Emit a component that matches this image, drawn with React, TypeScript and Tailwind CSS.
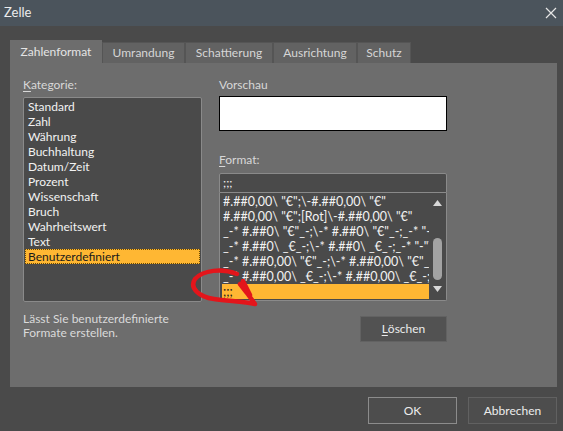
import React from "react";

const categories = [
    "Standard",
    "Zahl",
    "Währung",
    "Buchhaltung",
    "Datum/Zeit",
    "Prozent",
    "Wissenschaft",
    "Bruch",
    "Wahrheitswert",
    "Text",
    "Benutzerdefiniert",
];

const formats = [
    '#.##0,00\\ "€";\\-#.##0,00\\ "€"',
    '#.##0,00\\ "€";[Rot]\\-#.##0,00\\ "€"',
    '_-* #.##0\\ "€"_-;\\-* #.##0\\ "€"_-;_-* "-"\\ "€"_-;_@_-',
    '_-* #.##0\\ _€_-;\\-* #.##0\\ _€_-;_-* "-"\\ _€_-;_@_-',
    '_-* #.##0,00\\ "€"_-;\\-* #.##0,00\\ "€"_-;_-* "-"??\\ "€"_-;_@_-',
    '_-* #.##0,00\\ _€_-;\\-* #.##0,00\\ _€_-;_-* "-"??\\ _€_-;_@_-',
];

const tabs = ["Umrandung", "Schattierung", "Ausrichtung", "Schutz"];
const tabWidths = ["w-[83px]", "w-[88px]", "w-[84px]", "w-[54px]"];

function Label({ first, rest }: { first: string; rest: string }) {
    return (
        <div className="h-[15px] leading-[15px] text-[#d8d8d8]">
            <span className="underline underline-offset-2">{first}</span>
            {rest}
        </div>
    );
}

export default function App() {
    return (
        <div className="w-[563px] h-[431px] bg-[#4a4a4a] flex flex-col text-[12px] font-['Lato',sans-serif] overflow-hidden relative">
            {/* title bar */}
            <div className="h-[26px] bg-[#4b545c] flex items-center justify-between pl-[4px] pr-[6px] text-[#ececec] text-[13px]">
                <span>Zelle</span>
                <svg width="12" height="12" viewBox="0 0 12 12" className="text-[#e6e6e6]">
                    <path d="M1 1 L11 11 M11 1 L1 11" stroke="currentColor" strokeWidth="1.2" />
                </svg>
            </div>

            <div className="px-[10px] pt-[14px] pr-[6px]">
                {/* tabs */}
                <div className="flex items-end h-[23px]">
                    <div className="w-[92px] h-[23px] bg-[#6d6d6d] text-[#e4e4e4] flex items-center justify-center">Zahlenformat</div>
                    {tabs.map((t, i) => (
                        <div key={t} className={`${tabWidths[i]} h-[21px] bg-[#626262] border border-[#555555] border-b-0 text-[#d6d6d6] flex items-center justify-center`}>
                            {t}
                        </div>
                    ))}
                </div>

                {/* panel */}
                <div className="h-[324px] bg-[#6d6d6d] pl-[13px] pt-[14px] flex gap-[17px]">
                    <div className="w-[179px] flex flex-col">
                        <Label first="K" rest="ategorie:" />
                        <div className="mt-[5px] h-[205px] bg-[#4a4a4a] border border-[#8a8a8a] rounded-[2px] pt-[1px] px-[1px]">
                            {categories.map((c) => (
                                <div
                                    key={c}
                                    className={
                                        c === "Benutzerdefiniert"
                                            ? "h-[15px] leading-[14px] pl-[2px] bg-[#ffb733] text-[#1a1a1a] border border-dotted border-[#6b4a00]"
                                            : "h-[15px] leading-[15px] pl-[3px] text-[#f2f2f2]"
                                    }
                                >
                                    {c}
                                </div>
                            ))}
                        </div>
                        <div className="mt-[10px] leading-[14px] text-[#dadada]">
                            Lässt Sie benutzerdefinierte
                            <br />
                            Formate erstellen.
                        </div>
                    </div>

                    <div className="w-[228px] flex flex-col">
                        <div className="h-[15px] leading-[15px] text-[#d8d8d8]">Vorschau</div>
                        <div className="mt-[4px] h-[35px] bg-white border border-black" />
                        <div className="mt-[21px]">
                            <Label first="F" rest="ormat:" />
                        </div>
                        <div className="mt-[6px] h-[20px] bg-[#4a4a4a] border border-[#8a8a8a] rounded-t-[2px] pl-[3px] leading-[18px] text-[#f2f2f2]">
                            ;;;
                        </div>
                        <div className="h-[108px] bg-[#4a4a4a] border border-[#8a8a8a] border-t-0 rounded-b-[2px] flex pt-[1px] text-[12.5px]">
                            <div className="flex-1 min-w-0 pl-[2px]">
                                {formats.map((f) => (
                                    <div key={f} className="h-[15px] leading-[15px] pl-[1px] whitespace-nowrap overflow-hidden text-[#f2f2f2]">
                                        {f}
                                    </div>
                                ))}
                                <div className="h-[15px] leading-[15px] pl-[1px] bg-[#ffb733] text-[#1a1a1a]">;;;</div>
                            </div>
                            <div className="w-[17px] flex flex-col items-center">
                                <svg width="9" height="6" viewBox="0 0 9 6" className="mt-[6px]">
                                    <path d="M0 6 L4.5 0 L9 6 Z" fill="#d8d8d8" />
                                </svg>
                                <div className="mt-[32px] w-[9px] h-[42px] rounded-full bg-[#a3a3a3]" />
                                <svg width="9" height="6" viewBox="0 0 9 6" className="mt-[6px]">
                                    <path d="M0 0 L9 0 L4.5 6 Z" fill="#d8d8d8" />
                                </svg>
                            </div>
                        </div>
                        <div className="mt-[15px] flex justify-end">
                            <div className="w-[87px] h-[26px] bg-[#525252] border border-[#626262] flex items-center justify-center text-[#ececec]">
                                <span className="underline underline-offset-2">L</span>öschen
                            </div>
                        </div>
                    </div>
                </div>
            </div>

            {/* footer buttons */}
            <div className="mt-[10px] flex justify-end gap-[11px] pr-[6px]">
                <div className="w-[89px] h-[27px] bg-[#4d4d4d] border border-[#8c8c8c] flex items-center justify-center text-[#ececec]">OK</div>
                <div className="w-[89px] h-[27px] bg-[#4d4d4d] border border-[#616161] flex items-center justify-center text-[#ececec]">Abbrechen</div>
            </div>

            {/* red hand-drawn annotation */}
            <svg className="absolute left-0 top-0 pointer-events-none" width="563" height="431" viewBox="0 0 563 431">
                <path
                    d="M237 274 C222 268 203 270 195 279 C189 288 199 297 214 299 C229 301 244 302 255 304 L247 293 L240 284 M243 281 L250 295"
                    fill="none"
                    stroke="#e3151b"
                    strokeWidth="4.5"
                    strokeLinecap="round"
                    strokeLinejoin="round"
                />
            </svg>
        </div>
    );
}
